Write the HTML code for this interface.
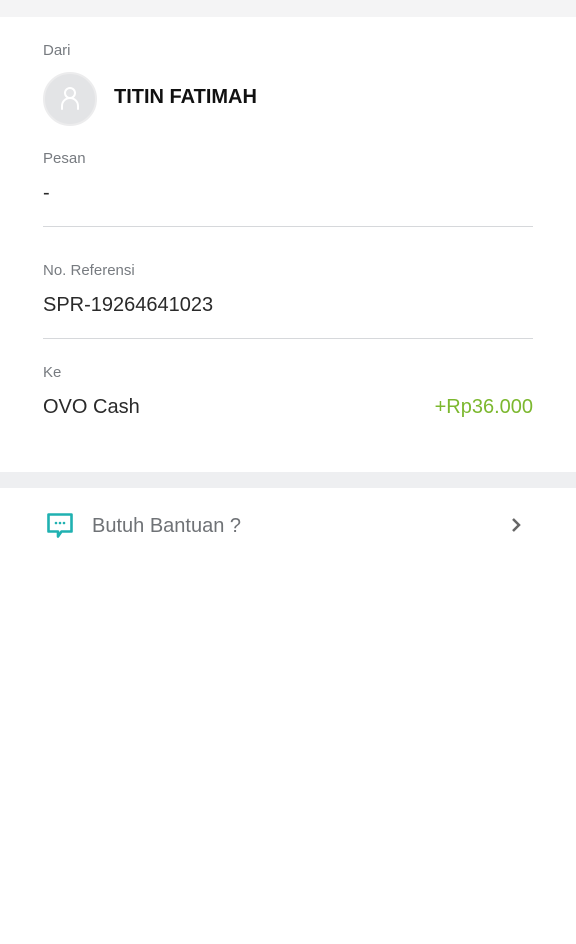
<!DOCTYPE html>
<html><head><meta charset="utf-8"><style>
*{margin:0;padding:0;box-sizing:border-box}
body{width:576px;height:944px;background:#fff;font-family:"Liberation Sans",sans-serif;position:relative;overflow:hidden}
.a{position:absolute}
.lbl{color:#777b80;font-size:15px}
.val{color:#2a2a2a;font-size:20px}
.line{position:absolute;left:43px;width:490px;height:1px;background:#d6d8db}
</style></head><body>
<div class="a" style="left:0;top:0;width:576px;height:17px;background:#f4f4f5"></div>
<div class="a lbl" style="left:43px;top:42px">Dari</div>
<div class="a" style="left:43px;top:72px;width:54px;height:54px;border-radius:50%;background:#e3e4e6;border:2px solid #ececed">
<svg width="50" height="50" viewBox="0 0 50 50" style="position:absolute;left:0;top:0"><circle cx="25" cy="19" r="5" fill="none" stroke="#fff" stroke-width="2"/><path d="M17 35v-3a8 8 0 0 1 16 0v3" fill="none" stroke="#fff" stroke-width="2" stroke-linecap="round"/></svg></div>
<div class="a" style="left:114px;top:86px;font-size:20px;font-weight:bold;color:#111">TITIN FATIMAH</div>
<div class="a lbl" style="left:43px;top:150px">Pesan</div>
<div class="a val" style="left:43px;top:182px">-</div>
<div class="line" style="top:226px"></div>
<div class="a lbl" style="left:43px;top:262px">No. Referensi</div>
<div class="a val" style="left:43px;top:294px">SPR-19264641023</div>
<div class="line" style="top:338px"></div>
<div class="a lbl" style="left:43px;top:364px">Ke</div>
<div class="a val" style="left:43px;top:396px">OVO Cash</div>
<div class="a val" style="right:43px;top:396px;color:#7cb82f">+Rp36.000</div>
<div class="a" style="left:0;top:472px;width:576px;height:16px;background:#eeeff1"></div>
<svg class="a" style="left:47px;top:513px" width="26" height="26" viewBox="0 0 26 26"><path d="M1.5 1.5h23v17h-10l-3.5 5v-5H1.5z" fill="none" stroke="#1fb1b1" stroke-width="2.6" stroke-linejoin="round"/><circle cx="9" cy="10" r="1.3" fill="#1fb1b1"/><circle cx="13" cy="10" r="1.3" fill="#1fb1b1"/><circle cx="17" cy="10" r="1.3" fill="#1fb1b1"/></svg>
<div class="a" style="left:92px;top:515px;font-size:20px;color:#6f7276">Butuh Bantuan ?</div>
<svg class="a" style="left:510px;top:517px" width="12" height="16" viewBox="0 0 12 16"><path d="M3 2l6 6-6 6" fill="none" stroke="#666" stroke-width="2.5"/></svg>
</body></html>
